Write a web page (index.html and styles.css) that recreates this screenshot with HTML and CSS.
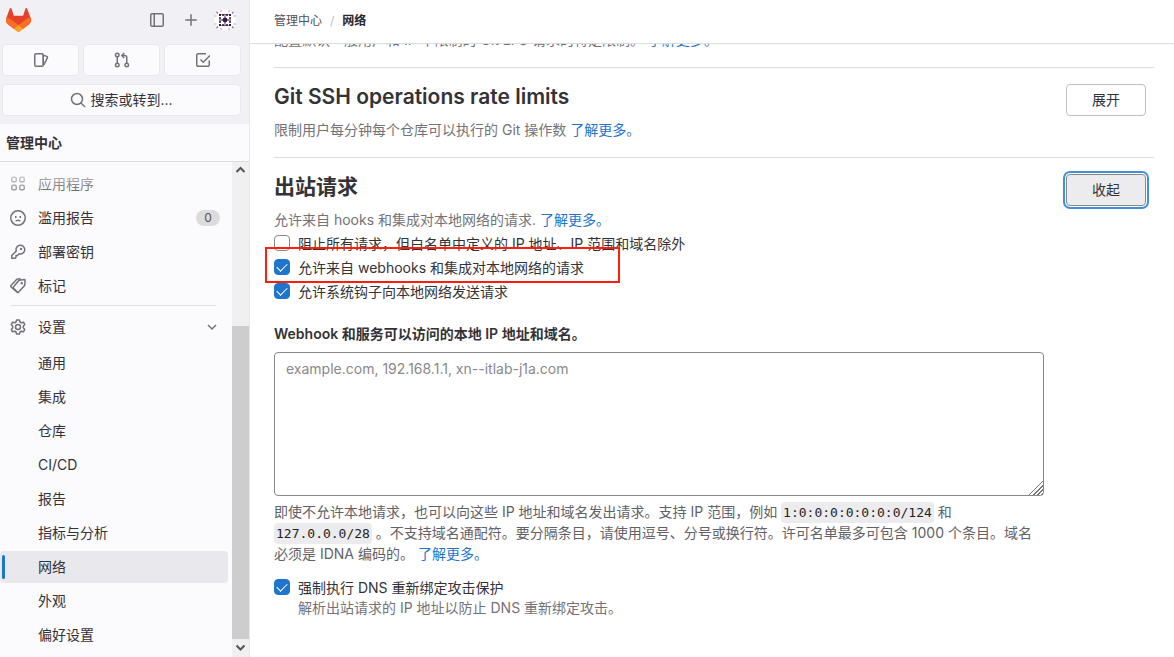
FILE: index.html
```html
<!DOCTYPE html>
<html lang="zh-CN">
<head>
<meta charset="utf-8">
<meta name="viewport" content="width=device-width, initial-scale=1">
<title>网络 · 管理中心</title>
<link rel="stylesheet" href="styles.css">
</head>
<body>
<aside class="sidebar">
  <div class="user-bar">
    <div class="brand-row">
      <a class="brand" href="#" aria-label="主页">
        <svg width="25" height="24" viewBox="0 0 25 24"><path fill="#E24329" d="m24.507 9.5-.034-.09L21.082.562a.896.896 0 0 0-1.694.091l-2.29 7.01H7.825L5.535.653a.898.898 0 0 0-1.694-.09L.451 9.411.416 9.5a6.297 6.297 0 0 0 2.09 7.278l.012.01.03.022 5.16 3.867 2.56 1.935 1.554 1.176a1.051 1.051 0 0 0 1.268 0l1.555-1.176 2.56-1.935 5.197-3.89.014-.01A6.297 6.297 0 0 0 24.507 9.5Z"/><path fill="#FC6D26" d="m24.507 9.5-.034-.09a11.44 11.44 0 0 0-4.56 2.051l-7.447 5.632 4.742 3.584 5.197-3.89.014-.01A6.297 6.297 0 0 0 24.507 9.5Z"/><path fill="#FCA326" d="m7.707 20.677 2.56 1.935 1.555 1.176a1.051 1.051 0 0 0 1.268 0l1.555-1.176 2.56-1.935-4.743-3.584-4.755 3.584Z"/><path fill="#FC6D26" d="M5.01 11.461a11.43 11.43 0 0 0-4.56-2.05L.416 9.5a6.297 6.297 0 0 0 2.09 7.278l.012.01.03.022 5.16 3.867 4.745-3.584-7.444-5.632Z"/></svg>
      </a>
      <button class="icon-button" type="button" aria-label="侧边栏">
        <svg class="icon" viewBox="0 0 16 16"><rect x="1.75" y="1.75" width="12.5" height="12.5" rx="1.25"/><path d="M5.25 2v12"/></svg>
      </button>
      <button class="icon-button" type="button" aria-label="新建">
        <svg class="icon" viewBox="0 0 16 16"><path d="M8 2.25v11.5M2.25 8h11.5"/></svg>
      </button>
      <button class="icon-button" type="button" aria-label="用户菜单">
        <svg width="24" height="24" viewBox="0 0 24 24"><circle cx="12" cy="12" r="11.5" fill="#fff" stroke="#ececef"/><g fill="#38154a"><circle cx="12" cy="12" r="2.400"/><path d="M6 11.600h12v.8H6zM11.600 6h.8v12h-.8z"/><path d="M6 6h2v2H6zM16 6h2v2h-2zM6 16h2v2H6zM16 16h2v2h-2zM9.200 6h1.600v2H9.200zM13.200 6h1.600v2h-1.600zM9.200 16h1.600v2H9.200zM13.200 16h1.600v2h-1.600zM6 9.200h2v1.600H6zM6 13.200h2v1.600H6zM16 9.200h2v1.600h-2zM16 13.200h2v1.600h-2z"/><path d="M6 6h12v.7H6zM6 17.300h12v.7H6z" opacity=".6"/><path d="M3 3.500l2.500 1.300L4.300 6zM21 3.500l-2.500 1.300L19.700 6zM3 20.500l2.500-1.300L4.300 18zM21 20.500l-2.500-1.300 1.200-1.200z" opacity=".7"/><path d="M1.500 7.500h2v1h-2zM20.500 7.500h2v1h-2zM1.500 15.500h2v1h-2zM20.500 15.500h2v1h-2zM7.500 2h1v2h-1zM15.500 2h1v2h-1zM7.500 20h1v2h-1zM15.500 20h1v2h-1z" opacity=".4"/></g></svg>
      </button>
    </div>
    <div class="counters">
      <button class="tile" type="button" aria-label="议题"><svg class="icon" viewBox="0 0 16 16"><rect x="1.750" y="1.750" width="8.500" height="12.500" rx="1.250"/><path d="M10.250 2.500v10.750M10.500 3.250l3.300 1.100a1 1 0 0 1 .65 1.250l-3.600 7.200"/></svg></button>
      <button class="tile" type="button" aria-label="合并请求"><svg class="icon" viewBox="0 0 16 16"><circle cx="3.250" cy="3" r="1.750"/><circle cx="3.250" cy="13" r="1.750"/><circle cx="12.750" cy="13" r="1.750"/><path d="M3.250 4.750v6.500M12.750 11.250V5.500a2 2 0 0 0-2-2H8M10.250 1 7.750 3.500l2.500 2.500"/></svg></button>
      <button class="tile" type="button" aria-label="待办事项"><svg class="icon" viewBox="0 0 16 16"><path d="M11 1.750H3A1.250 1.250 0 0 0 1.750 3v10A1.250 1.250 0 0 0 3 14.250h10A1.250 1.250 0 0 0 14.250 13V8.500M5.500 7.500 8.250 10.250 15 3.500"/></svg></button>
    </div>
    <button class="search" type="button"><svg class="icon" viewBox="0 0 16 16"><circle cx="7" cy="7" r="5.500"/><path d="m11 11 4 4"/></svg>搜索或转到...</button>
  </div>
  <h2 class="context">管理中心</h2>
  <div class="nav-area">
    <nav class="nav" aria-label="管理中心">
      <ul class="nav-list">
        <li><a class="nav-item" href="#"><svg class="icon" viewBox="0 0 16 16"><rect x="1.750" y="1.250" width="4.500" height="4.500" rx="1.250"/><rect x="9.750" y="1.250" width="4.500" height="4.500" rx="1.250"/><rect x="1.750" y="9.250" width="4.500" height="4.500" rx="1.250"/><rect x="9.750" y="9.250" width="4.500" height="4.500" rx="1.250"/></svg>应用程序</a></li>
        <li><a class="nav-item" href="#"><svg class="icon" viewBox="0 0 16 16"><circle cx="8" cy="8" r="7.250"/><path d="M5.700 11.250c.7-1.500 3.900-1.500 4.600 0"/><path d="M5 7h1.500M9.500 7H11" stroke-width="1.800"/></svg>滥用报告<span class="badge">0</span></a></li>
        <li><a class="nav-item" href="#"><svg class="icon" viewBox="0 0 16 16"><path d="M6.250 6.900A4.350 4.350 0 1 1 9.300 9.800L7.500 11.500H6v1.700L5 14.250H1.750V11.500z"/><circle cx="11" cy="5" r=".5"/></svg>部署密钥</a></li>
        <li><a class="nav-item" href="#"><svg class="icon" viewBox="0 0 16 16"><path d="m9.300 2.300 5-.8a.7.700 0 0 1 .8.800l-.4 4.900a1 1 0 0 1-.3.600l-5.800 6.300a1 1 0 0 1-1.400 0L3.600 10.200a1 1 0 0 1 0-1.400l5-6.100a1 1 0 0 1 .7-.4Z"/><path d="M11 .9 7.500 1a1 1 0 0 0-.7.300L1 7.500a1 1 0 0 0 0 1.400l6.200 5.300"/><circle cx="11.700" cy="5.300" r=".5"/></svg>标记</a></li>
      </ul>
      <hr class="divider">
      <button class="nav-item nav-toggle" type="button" aria-expanded="true"><svg class="icon" viewBox="0 0 16 16"><path d="M6.600.9h2.800l.6 2.100 1.300.75 2.100-.55 1.400 2.400L13.300 7.200v1.600l1.500 1.600-1.400 2.400-2.100-.55-1.300.75-.6 2.100H6.600L6 13l-1.300-.75-2.100.55-1.400-2.400 1.500-1.600V7.200L1.200 5.600l1.400-2.400 2.100.55L6 3z"/><circle cx="8" cy="8" r="2.500"/></svg>设置<svg class="chevron" viewBox="0 0 12 12"><path d="m2 4 4 4 4-4"/></svg></button>
      <ul class="nav-list sub-list">
        <li><a class="nav-item" href="#">通用</a></li>
        <li><a class="nav-item" href="#">集成</a></li>
        <li><a class="nav-item" href="#">仓库</a></li>
        <li><a class="nav-item" href="#">CI/CD</a></li>
        <li><a class="nav-item" href="#">报告</a></li>
        <li><a class="nav-item" href="#">指标与分析</a></li>
        <li><a class="nav-item current" href="#" aria-current="page">网络</a></li>
        <li><a class="nav-item" href="#">外观</a></li>
        <li><a class="nav-item" href="#">偏好设置</a></li>
      </ul>
    </nav>
    <div class="scrollbar" aria-hidden="true">
      <svg class="arrow" viewBox="0 0 17 17"><path d="m4.500 10 4-4 4 4"/></svg>
      <div class="track"><div class="thumb"></div></div>
      <svg class="arrow" viewBox="0 0 17 17"><path d="m4.500 6.500 4 4 4-4"/></svg>
    </div>
  </div>
</aside>

<main class="main">
  <nav class="breadcrumbs" aria-label="面包屑">
    <a href="#">管理中心</a><span class="slash">/</span><a class="here" href="#">网络</a>
  </nav>
  <div class="content">
    <div class="scrolled">
      <section class="section-end">
        <p class="desc">配置默认一般用户和 IP 不限制的 Git LFS 请求的特定限制。 <a href="#">了解更多。</a></p>
      </section>
      <section class="section">
        <header class="section-head">
          <div>
            <h4 class="title">Git SSH operations rate limits</h4>
            <p class="desc">限制用户每分钟每个仓库可以执行的 Git 操作数 <a href="#">了解更多。</a></p>
          </div>
          <button class="btn" type="button">展开</button>
        </header>
      </section>
      <section class="section">
        <header class="section-head">
          <div>
            <h4 class="title">出站请求</h4>
            <p class="desc">允许来自 hooks 和集成对本地网络的请求. <a href="#">了解更多。</a></p>
          </div>
          <button class="btn btn-focused" type="button">收起</button>
        </header>
        <form class="form">
          <div class="check"><input type="checkbox" id="block-all"><label for="block-all">阻止所有请求，但白名单中定义的 IP 地址、IP 范围和域名除外</label></div>
          <div class="check marked"><input type="checkbox" id="allow-hooks" checked><label for="allow-hooks">允许来自 webhooks 和集成对本地网络的请求</label></div>
          <div class="check"><input type="checkbox" id="allow-system" checked><label for="allow-system">允许系统钩子向本地网络发送请求</label></div>
          <label class="field-label" for="allowlist">Webhook 和服务可以访问的本地 IP 地址和域名。</label>
          <textarea class="textarea" id="allowlist" placeholder="example.com, 192.168.1.1, xn--itlab-j1a.com"></textarea>
          <p class="help">即使不允许本地请求，也可以向这些 IP 地址和域名发出请求。支持 IP 范围，例如 <code>1:0:0:0:0:0:0:0/124</code> 和 <code>127.0.0.0/28</code> 。不支持域名通配符。要分隔条目，请使用逗号、分号或换行符。许可名单最多可包含 1000 个条目。域名必须是 IDNA 编码的。 <a href="#">了解更多。</a></p>
          <div class="check"><input type="checkbox" id="dns" checked><label for="dns">强制执行 DNS 重新绑定攻击保护<span class="check-help">解析出站请求的 IP 地址以防止 DNS 重新绑定攻击。</span></label></div>
        </form>
      </section>
    </div>
  </div>
</main>
</body>
</html>
```
FILE: styles.css
```css
* { box-sizing: border-box; }

body {
  margin: 0;
  display: flex;
  height: 100vh;
  overflow: hidden;
  background: #fff;
  color: #333238;
  font: 14px/20px Inter, "Noto Sans CJK SC", sans-serif;
}

button { font: inherit; color: inherit; cursor: pointer; }
a { color: #1f75cb; text-decoration: none; }
h2, h4, p, ul { margin: 0; padding: 0; }
ul { list-style: none; }

.icon {
  flex: none;
  width: 16px;
  height: 16px;
  fill: none;
  stroke: #737278;
  stroke-width: 1.5;
  stroke-linejoin: round;
}

/* Sidebar */
.sidebar {
  flex: none;
  display: flex;
  flex-direction: column;
  width: 250px;
  background: #fbfafd;
  border-right: 1px solid #e7e6ea;
}

.user-bar {
  display: flex;
  flex-direction: column;
  gap: 8px;
  padding: 4px 8px 8px 2px;
  background: #f1f0f4;
}

.brand-row { display: flex; align-items: center; gap: 2px; height: 32px; }
.brand { display: flex; margin: 0 auto 0 4px; }

.icon-button {
  display: flex;
  align-items: center;
  justify-content: center;
  width: 32px;
  height: 32px;
  padding: 0;
  border: 0;
  background: none;
}

.counters { display: grid; grid-template-columns: repeat(3, 1fr); gap: 4px; }

.tile, .search {
  display: flex;
  align-items: center;
  justify-content: center;
  gap: 4px;
  height: 32px;
  padding: 0;
  border: 1px solid #e9e8ec;
  border-radius: 4px;
  background: #fbfafd;
}

.context {
  padding: 9px 6px 8px;
  border-bottom: 1px solid #dcdcde;
  font-size: 14px;
  line-height: 20px;
  font-weight: 600;
}

.nav-area { position: relative; flex: 1; display: flex; min-height: 0; }

.nav-area::before {
  content: "";
  position: absolute;
  z-index: 1;
  inset: 0 17px auto 0;
  height: 40px;
  background: linear-gradient(#fbfafd, #fbfafd00);
  pointer-events: none;
}

.nav { flex: 1; padding: 6px 4px 0 0; overflow: hidden; }
.nav-list { display: flex; flex-direction: column; gap: 2px; }

.nav-item {
  position: relative;
  display: flex;
  align-items: center;
  gap: 12px;
  width: 100%;
  height: 32px;
  padding: 0 8px 0 10px;
  border: 0;
  border-radius: 4px;
  background: none;
  color: #333238;
}

.badge {
  min-width: 24px;
  margin-left: auto;
  border-radius: 8px;
  background: #dcdcde;
  color: #535158;
  font-size: 12px;
  line-height: 16px;
  text-align: center;
}

.divider { margin: 3px 12px 5px 10px; border: 0; border-top: 1px solid #e2e1e6; }
.chevron { width: 12px; height: 12px; margin: 0 2px 0 auto; fill: none; stroke: #737278; stroke-width: 1.5; }
.nav-toggle { margin-bottom: 4px; }
.sub-list .nav-item { padding-left: 38px; }
.sub-list .current { background: #e9e8ec; }

.current::before {
  content: "";
  position: absolute;
  left: 2px;
  top: 4px;
  bottom: 4px;
  width: 3px;
  border-radius: 2px;
  background: #1f75cb;
}

.scrollbar { display: flex; flex-direction: column; width: 17px; padding-bottom: 1px; background: #f0f0f0; }
.arrow { flex: none; width: 17px; height: 17px; fill: none; stroke: #555; stroke-width: 2; }
.track { flex: 1; display: flex; flex-direction: column; justify-content: flex-end; }
.thumb { height: 68%; background: #cdcdcd; }

/* Page */
.main { flex: 1; min-width: 0; display: flex; flex-direction: column; }

.breadcrumbs {
  flex: none;
  display: flex;
  gap: 8px;
  padding: 11px 24px 12px;
  border-bottom: 1px solid #dcdcde;
  font-size: 12px;
}

.breadcrumbs a { color: #535158; }
.breadcrumbs .here { color: #28272d; font-weight: 600; }
.slash { color: #bfbfc3; }

.content { flex: 1; min-height: 0; overflow: hidden; }
.scrolled { margin-top: -14px; padding: 0 20px 0 24px; }
.section-end { padding-bottom: 17px; }
.section { padding: 16px 0 17px; border-top: 1px solid #dcdcde; }

.section-head {
  display: flex;
  align-items: flex-start;
  justify-content: space-between;
  padding-right: 8px;
}

.title { margin-bottom: 10px; font-size: 21px; line-height: 26px; font-weight: 600; }
.desc { color: #737278; }

.btn {
  min-width: 80px;
  height: 32px;
  padding: 0 12px;
  border: 1px solid #bfbfc3;
  border-radius: 4px;
  background: #fff;
}

.btn-focused {
  border-color: #89888d;
  background: #ececef;
  box-shadow: 0 0 0 1px #fff, 0 0 0 3px #428fdc;
}

.form { max-width: 770px; padding-top: 2px; }

.check {
  position: relative;
  display: flex;
  align-items: flex-start;
  gap: 8px;
  width: fit-content;
  padding: 2px 0;
}

.check input {
  appearance: none;
  flex: none;
  display: grid;
  place-items: center;
  width: 16px;
  height: 16px;
  margin: 1px 0 0;
  border: 1px solid #89888d;
  border-radius: 4px;
  background: #fff;
}

.check input:checked { border-color: #1f75cb; background: #1f75cb; }

.check input:checked::before {
  content: "";
  width: 9px;
  height: 5px;
  margin-bottom: 3px;
  border: solid #fff;
  border-width: 0 0 1px 1px;
  rotate: -45deg;
}

.check-help { display: block; color: #737278; }

.marked::after {
  content: "";
  position: absolute;
  inset: -9px -36px -3px -9px;
  border: 2px solid #ff1d0d;
  pointer-events: none;
}

.field-label { display: block; margin: 20px 0 8px; font-weight: 600; }

.textarea {
  display: block;
  width: 100%;
  height: 144px;
  padding: 6px 11px;
  border: 1px solid #89888d;
  border-radius: 4px;
  background: #fff;
  color: inherit;
  font: inherit;
}

.textarea::placeholder { color: #89888d; }

.textarea::-webkit-resizer {
  background: repeating-linear-gradient(135deg, #fff 0 1px, #777 1px 2px, #fff 2px 3px);
  clip-path: polygon(100% 0, 100% 100%, 0 100%);
  background: linear-gradient(135deg, #fff 50%, #777 50% 56%, #fff 56% 64%, #777 64% 70%, #fff 70% 78%, #777 78% 84%, #fff 84% 92%, #777 92%);
}

.help { margin: 5px 0 12px; color: #626168; line-height: 21px; }

code {
  padding: 3px 2px;
  border-radius: 4px;
  background: #ececef;
  color: #1f1e24;
  font: 13px/1 "DejaVu Sans Mono", monospace;
}
```
